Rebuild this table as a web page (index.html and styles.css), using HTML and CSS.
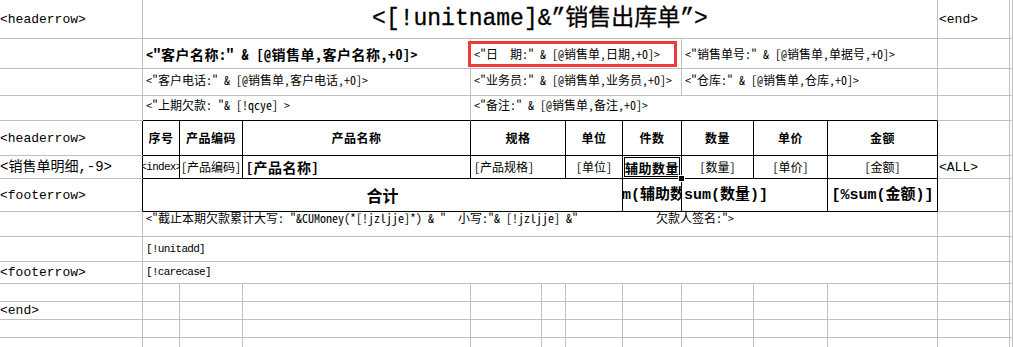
FILE: index.html
```html
<!DOCTYPE html>
<html lang="zh-CN">
<head>
<meta charset="utf-8">
<title>销售出库单</title>
<link rel="stylesheet" href="styles.css">
</head>
<body>
<div class="sheet">
  <!-- row 1 -->
  <div class="c lab">&lt;headerrow&gt;</div>
  <div class="c s10 title">&lt;[!unitname]&amp;”销售出库单”&gt;</div>
  <div class="c lab labr">&lt;end&gt;</div>
  <div class="c"></div>
  <!-- row 2 -->
  <div class="c"></div>
  <div class="c s3 l bold14">&lt;"客户名称:" &amp; [@销售单,客户名称,+0]&gt;</div>
  <div class="c s4 l mark">&lt;"日　期:" &amp; [@销售单,日期,+0]&gt;</div>
  <div class="c s3 l">&lt;"销售单号:" &amp; [@销售单,单据号,+0]&gt;</div>
  <div class="c"></div>
  <div class="c"></div>
  <!-- row 3 -->
  <div class="c"></div>
  <div class="c s3 l up2">&lt;"客户电话:" &amp; [@销售单,客户电话,+0]&gt;</div>
  <div class="c s4 l up2">&lt;"业务员:" &amp; [@销售单,业务员,+0]&gt;</div>
  <div class="c s3 l up2">&lt;"仓库:" &amp; [@销售单,仓库,+0]&gt;</div>
  <div class="c"></div>
  <div class="c"></div>
  <!-- row 4 -->
  <div class="c"></div>
  <div class="c s3 l up3 kb">&lt;"上期欠款: "&amp; [!qcye] &gt;</div>
  <div class="c s7 l up3 kb">&lt;"备注:" &amp; [@销售单,备注,+0]&gt;</div>
  <div class="c"></div>
  <div class="c"></div>
  <!-- row 5 : table header -->
  <div class="c lab kr">&lt;headerrow&gt;</div>
  <div class="c k m th">序号</div>
  <div class="c k m th">产品编码</div>
  <div class="c k m th">产品名称</div>
  <div class="c s2 k m th">规格</div>
  <div class="c k m th">单位</div>
  <div class="c k m th">件数</div>
  <div class="c k m th">数量</div>
  <div class="c k m th">单价</div>
  <div class="c k m th">金额</div>
  <div class="c"></div>
  <div class="c"></div>
  <!-- row 6 : detail -->
  <div class="c lab lab14 kr">&lt;销售单明细,-9&gt;</div>
  <div class="c k m mono10">&lt;index&gt;</div>
  <div class="c k m">[产品编码]</div>
  <div class="c k l bold14">[产品名称]</div>
  <div class="c s2 k l">[产品规格]</div>
  <div class="c k m">[单位]</div>
  <div class="c k m sel bold13">辅助数量<span class="handle"></span></div>
  <div class="c k m">[数量]</div>
  <div class="c k m">[单价]</div>
  <div class="c k m">[金额]</div>
  <div class="c lab labr">&lt;ALL&gt;</div>
  <div class="c"></div>
  <!-- row 7 : footer -->
  <div class="c lab kr">&lt;footerrow&gt;</div>
  <div class="c s6 k m total">合计</div>
  <div class="c k m sum">[%sum(辅助数量)]</div>
  <div class="c s2 k l sum sumq">sum(数量)]</div>
  <div class="c k m sum">[%sum(金额)]</div>
  <div class="c"></div>
  <div class="c"></div>
  <!-- row 8 -->
  <div class="c"></div>
  <div class="c s10 l top">&lt;"截止本期欠款累计大写: "&amp;CUMoney(*[!jzljje]*) &amp; "  小写:"&amp; [!jzljje] &amp;"             欠款人签名:"&gt;</div>
  <div class="c"></div>
  <div class="c"></div>
  <!-- row 9 -->
  <div class="c"></div>
  <div class="c s10 l mono10">[!unitadd]</div>
  <div class="c"></div>
  <div class="c"></div>
  <!-- row 10 -->
  <div class="c lab">&lt;footerrow&gt;</div>
  <div class="c s10 l mono10">[!carecase]</div>
  <div class="c"></div>
  <div class="c"></div>
  <!-- row 11 -->
  <div class="c"></div><div class="c"></div><div class="c"></div><div class="c"></div><div class="c"></div><div class="c"></div><div class="c"></div><div class="c"></div><div class="c"></div><div class="c"></div><div class="c"></div><div class="c"></div><div class="c"></div>
  <!-- row 12 -->
  <div class="c lab">&lt;end&gt;</div><div class="c"></div><div class="c"></div><div class="c"></div><div class="c"></div><div class="c"></div><div class="c"></div><div class="c"></div><div class="c"></div><div class="c"></div><div class="c"></div><div class="c"></div><div class="c"></div>
  <!-- row 13 -->
  <div class="c"></div><div class="c"></div><div class="c"></div><div class="c"></div><div class="c"></div><div class="c"></div><div class="c"></div><div class="c"></div><div class="c"></div><div class="c"></div><div class="c"></div><div class="c"></div><div class="c"></div>
  <!-- row 14 -->
  <div class="c"></div><div class="c"></div><div class="c"></div><div class="c"></div><div class="c"></div><div class="c"></div><div class="c"></div><div class="c"></div><div class="c"></div><div class="c"></div><div class="c"></div><div class="c"></div><div class="c"></div>
</div>
</body>
</html>
```

FILE: styles.css
```css
* { box-sizing: border-box; }
html, body { margin: 0; padding: 0; background: #fff; }
body {
  width: 1013px;
  height: 347px;
  overflow: hidden;
  font-family: "Noto Sans Mono CJK SC", "Noto Sans CJK SC", sans-serif;
  font-size: 12px;
  color: #000;
}
.sheet {
  display: grid;
  grid-template-columns: 143px 37px 63px 228px 71px 24px 57px 59px 72px 74px 110px 72px 1fr;
  grid-template-rows: 39px 30px 27px 25px 35px 23px 33px 25px 25px 22px 18px 18px 18px 18px;
}
.c {
  border-right: 1px solid #c0c0c0;
  border-bottom: 1px solid #c0c0c0;
  display: flex;
  align-items: center;
  overflow: hidden;
  white-space: pre;
  min-width: 0;
  line-height: 1;
}
.s2 { grid-column: span 2; }
.s3 { grid-column: span 3; }
.s4 { grid-column: span 4; }
.s6 { grid-column: span 6; }
.s7 { grid-column: span 7; }
.s10 { grid-column: span 10; }

.l { justify-content: flex-start; padding-left: 3px; }
.m { justify-content: center; }
.up2 { padding-bottom: 4px; }
.up3 { padding-bottom: 6px; }
.top { align-items: flex-start; padding-top: 0; }

.k { border-right-color: #000; border-bottom-color: #000; }
.kr { border-right-color: #000; }
.kb { border-bottom-color: #000; }

.lab {
  font-family: "Liberation Mono", "Noto Sans CJK SC", monospace;
  font-size: 13px;
}
.lab14 { font-size: 14px; }
.labr { padding-left: 1px; }

.title {
  justify-content: center;
  font-family: "Liberation Mono", "Noto Sans CJK SC", monospace;
  font-size: 23px;
  -webkit-text-stroke: 0.3px #000;
}

.bold14 { font-weight: 700; font-size: 14px; letter-spacing: 0.5px; }
.bold13 { font-weight: 700; font-size: 13px; letter-spacing: 0.5px; }
.th { font-weight: 700; font-size: 12px; letter-spacing: 0.5px; }
.mono10 {
  font-family: "Liberation Mono", "Noto Sans CJK SC", monospace;
  font-size: 11px;
  letter-spacing: -0.7px;
}

.total { font-weight: 700; font-size: 16px; }
.sum {
  font-family: "Liberation Mono", "Noto Sans CJK SC", monospace;
  font-weight: 700;
  font-size: 15px;
}
.sumq { padding-left: 2px; }

.mark { position: relative; overflow: visible; z-index: 1; }
.mark::after {
  content: "";
  position: absolute;
  top: 2px;
  left: -3px;
  right: 4px;
  bottom: 1px;
  border: 3px solid #ef3a3a;
}

.sel {
  position: relative;
  z-index: 2;
  overflow: visible;
  box-shadow: inset 0 0 0 1px #fff, inset 0 0 0 2px #000;
}
.handle {
  position: absolute;
  right: -4px;
  bottom: -4px;
  width: 7px;
  height: 7px;
  background: #000;
  border: 1px solid #fff;
}
```
